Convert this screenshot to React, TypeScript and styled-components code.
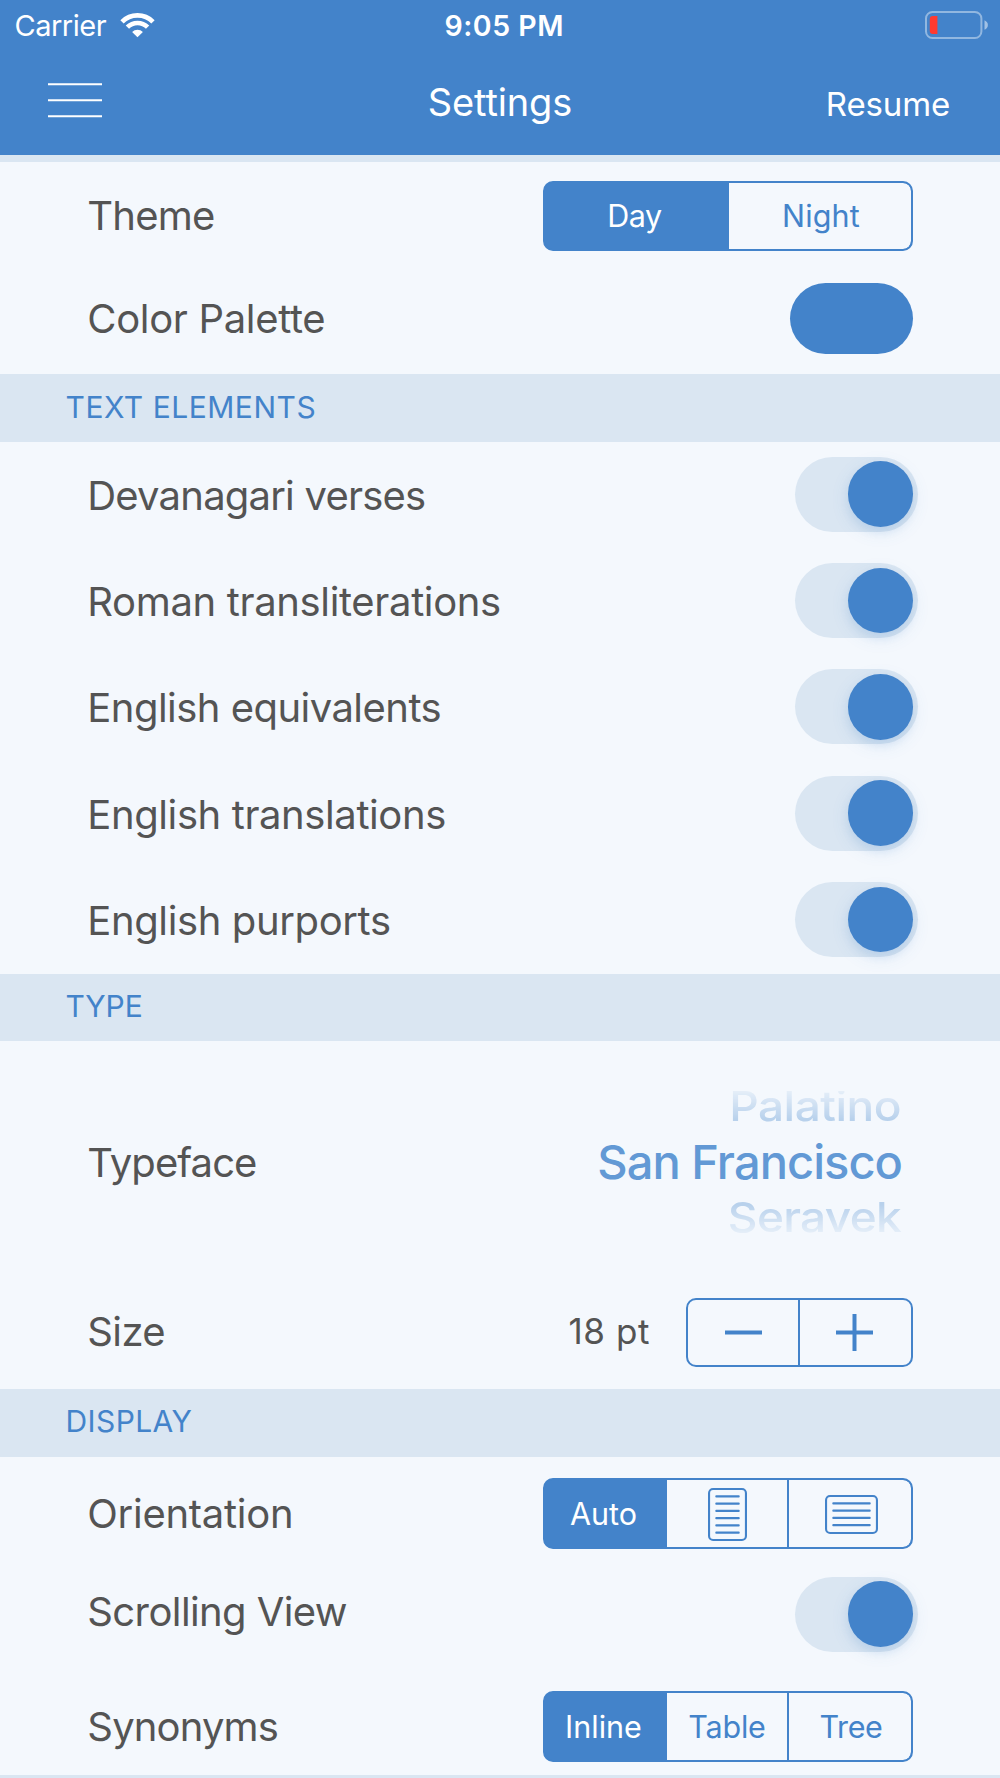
import React, { useState } from "react";
import styled, { createGlobalStyle, css, ThemeProvider } from "styled-components";

const theme = {
  blue: "#4383ca",
  paper: "#f4f8fd",
  band: "#dae6f2",
  ink: "#545454",
  picker: "#6299d5",
  pickerFaded: "#b8d1ec",
};

const GlobalStyle = createGlobalStyle`
  * { box-sizing: border-box; }
  body {
    margin: 0;
    background: ${theme.paper};
    font-family: Inter, Roboto, "Liberation Sans", sans-serif;
    -webkit-font-smoothing: antialiased;
  }
  button {
    margin: 0;
    padding: 0;
    border: 0;
    background: none;
    color: inherit;
    font: inherit;
  }
`;

const Screen = styled.div`
  width: 1000px;
  height: 1778px;
  overflow: hidden;
  display: flex;
  flex-direction: column;
  background: ${(p) => p.theme.paper};
`;

/* ---------- header ---------- */

const Header = styled.header`
  flex: none;
  height: 162px;
  background: ${(p) => p.theme.blue};
  color: #fff;
  border-bottom: 7px solid ${(p) => p.theme.band};
`;

const StatusBar = styled.div`
  height: 50px;
  display: grid;
  grid-template-columns: 1fr auto 1fr;
  align-items: center;
  padding: 0 12px 0 14.5px;
`;

const Carrier = styled.div`
  display: flex;
  align-items: center;
  gap: 14px;
  font-size: 29px;
  letter-spacing: -0.5px;
`;

const Clock = styled.time`
  font-size: 28.5px;
  font-weight: 600;
  letter-spacing: 0.5px;
  margin-left: 6px;
`;

const StatusEnd = styled.div`
  display: flex;
  justify-content: flex-end;
  margin-bottom: 1px;
`;

const NavBar = styled.div`
  height: 105px;
  display: grid;
  grid-template-columns: 1fr auto 1fr;
  align-items: center;
  padding: 0 50px 0 48px;
`;

const MenuButton = styled.button`
  width: 54px;
  height: 34.5px;
  margin-bottom: 4px;
  display: block;
`;

const Title = styled.h1`
  margin: 0 0 2px 2px;
  font-size: 38px;
  font-weight: 400;
  letter-spacing: -0.15px;
`;

const NavAction = styled.button`
  justify-self: end;
  margin-top: 3px;
  font-size: 33px;
  letter-spacing: -0.15px;
`;

/* ---------- sections and rows ---------- */

const SectionTitle = styled.h2<{ $track: number }>`
  flex: none;
  height: 67.7px;
  margin: 0;
  padding: 0 0 3px 65.5px;
  display: flex;
  align-items: center;
  background: ${(p) => p.theme.band};
  color: ${(p) => p.theme.blue};
  font-size: 30px;
  font-weight: 400;
  letter-spacing: ${(p) => p.$track}px;
`;

const Section = styled.section<{ $height: number }>`
  flex: none;
  height: ${(p) => p.$height}px;
`;

const Row = styled.div<{ $height: number; $above?: number }>`
  height: ${(p) => p.$height}px;
  margin-top: ${(p) => p.$above ?? 0}px;
  padding: 0 87px 0 87.3px;
  display: flex;
  align-items: center;
  justify-content: space-between;
`;

const Label = styled.span<{ $track: number; $nudge?: number }>`
  color: ${(p) => p.theme.ink};
  font-size: 40px;
  letter-spacing: ${(p) => p.$track}px;
  margin-top: ${(p) => p.$nudge ?? 0}px;
  white-space: nowrap;
`;

/* ---------- controls ---------- */

const Segmented = styled.div<{ $height: number; $columns: string; $drop?: number }>`
  width: 370px;
  height: ${(p) => p.$height}px;
  margin-top: ${(p) => p.$drop ?? 0}px;
  display: grid;
  grid-template-columns: ${(p) => p.$columns};
  border: 2px solid ${(p) => p.theme.blue};
  border-radius: 10px;
  background: ${(p) => p.theme.blue};
  overflow: hidden;
`;

const Segment = styled.button<{ $active?: boolean; $track?: number }>`
  display: flex;
  align-items: center;
  justify-content: center;
  font-size: 30.5px;
  letter-spacing: ${(p) => p.$track ?? 0}px;
  color: ${(p) => (p.$active ? "#fff" : p.theme.blue)};
  background: ${(p) => (p.$active ? p.theme.blue : p.theme.paper)};

  &:not(:last-child) {
    border-right: 2px solid ${(p) => p.theme.blue};
  }
  &:first-child {
    padding-right: 5px;
    border-right: 0;
  }
  &:last-child {
    padding-left: 2px;
    border-radius: 0 8px 8px 0;
  }
  svg {
    margin-top: 2px;
  }
`;

const Swatch = styled.button`
  width: 123px;
  height: 71.5px;
  border-radius: 36px;
  background: ${(p) => p.theme.blue};
`;

const Track = styled.button<{ $on: boolean; $shift: number }>`
  width: 123.3px;
  height: 75px;
  margin: ${(p) => p.$shift}px -5px 0 0;
  padding: 0 5px;
  display: flex;
  align-items: center;
  justify-content: ${(p) => (p.$on ? "flex-end" : "flex-start")};
  border-radius: 37.5px;
  background: ${(p) => p.theme.band};
`;

const Knob = styled.span`
  width: 65.5px;
  height: 65.5px;
  border-radius: 50%;
  background: ${(p) => p.theme.blue};
  box-shadow: 0 5px 18px rgba(66, 131, 202, 0.13), 0 5px 8px rgba(66, 131, 202, 0.12);
`;

const Picker = styled.div`
  height: 142px;
  width: 330px;
  margin-right: 11px;
  display: grid;
  grid-template-rows: 31px 80px 31px;
`;

const PickerRow = styled.div<{ $fade?: "up" | "down"; $track: number }>`
  display: flex;
  align-items: center;
  justify-content: flex-end;
  color: ${(p) => (p.$fade ? p.theme.pickerFaded : p.theme.picker)};
  font-size: ${(p) => (p.$fade ? 46 : 47)}px;
  line-height: 1;
  font-weight: 500;
  letter-spacing: ${(p) => p.$track}px;
  ${(p) =>
    p.$fade &&
    css`
      mask-image: linear-gradient(
        ${p.$fade === "up" ? "to top" : "to bottom"},
        #000 10%,
        rgba(0, 0, 0, 0.24) 100%
      );
    `}

  span {
    transform: ${(p) => (p.$fade ? "scaleY(0.9)" : "none")};
    margin-right: ${(p) => (p.$fade ? "1px" : "0")};
  }
`;

const SizeGroup = styled.div`
  display: flex;
  align-items: center;
  gap: 36px;
`;

const SizeValue = styled.span`
  color: ${(p) => p.theme.ink};
  font-size: 35px;
  letter-spacing: 0.6px;
  margin-bottom: 1px;
`;

const Stepper = styled.div`
  width: 227px;
  height: 69.6px;
  margin-top: 1px;
  display: grid;
  grid-template-columns: 110px 1fr;
  border: 2px solid ${(p) => p.theme.blue};
  border-radius: 10px;
`;

const StepButton = styled.button`
  display: flex;
  align-items: center;
  justify-content: center;

  &:first-child {
    padding-left: 1px;
  }
  & + & {
    padding-right: 3px;
    border-left: 2px solid ${(p) => p.theme.blue};
  }
`;

const NextSection = styled.div`
  flex: 1;
  background: ${(p) => p.theme.band};
`;

/* ---------- icons ---------- */

const WifiIcon = () => (
  <svg width="35" height="25" viewBox="0 0 35 25" fill="none" stroke="#fff" strokeWidth="4.7">
    <path d="M2.01 8.81A21.9 21.9 0 0 1 32.99 8.81" />
    <path d="M7.39 14.19A14.3 14.3 0 0 1 27.61 14.19" />
    <path d="M17.5 24.3L12.1 18.9A7.6 7.6 0 0 1 22.9 18.9Z" fill="#fff" stroke="none" />
  </svg>
);

const BatteryIcon = () => (
  <svg width="63" height="28" viewBox="0 0 63 28">
    <rect x="1" y="1" width="55.4" height="26" rx="6.5" fill="none" stroke="#fff" strokeOpacity="0.42" strokeWidth="2" />
    <path d="M59.5 9.2c2.2 1 3.4 2.8 3.4 4.8s-1.2 3.8-3.4 4.8z" fill="#fff" fillOpacity="0.5" />
    <path d="M12.4 5v18H8a3.2 3.2 0 0 1-3.2-3.2V8.200A3.2 3.2 0 0 1 8 5z" fill="#ff3a30" />
  </svg>
);

const MenuIcon = () => (
  <svg width="54" height="34.5" viewBox="0 0 54 34.5" stroke="#fff" strokeWidth="2">
    <path d="M0 1.25H54M0 17.25H54M0 33.25H54" />
  </svg>
);

const PageIcon = ({ landscape }: { landscape?: boolean }) => {
  const w = landscape ? 53 : 39;
  const h = landscape ? 39 : 53;
  const count = landscape ? 4 : 6;
  return (
    <svg width={w} height={h} viewBox={`0 0 ${w} ${h}`} fill="none" stroke={theme.blue} strokeWidth="2.1">
      <rect x="1.05" y="1.05" width={w - 2.1} height={h - 2.1} rx="4" />
      {Array.from({ length: count }, (_, i) => (
        <path key={i} strokeLinecap="round" d={`M8.3 ${8.4 + i * 7.25}H${w - 8.3}`} />
      ))}
    </svg>
  );
};

const MinusIcon = () => (
  <svg width="37" height="37" viewBox="0 0 37 37" stroke={theme.blue} strokeWidth="4">
    <path d="M0 18.500H37" />
  </svg>
);

const PlusIcon = () => (
  <svg width="37" height="37" viewBox="0 0 37 37" stroke={theme.blue} strokeWidth="4">
    <path d="M0 18.500H37M18.500 0V37" />
  </svg>
);

/* ---------- composition ---------- */

const Toggle = ({ shift }: { shift: number }) => {
  const [on, setOn] = useState(true);
  return (
    <Track $on={on} $shift={shift} role="switch" aria-checked={on} onClick={() => setOn(!on)}>
      <Knob />
    </Track>
  );
};

const textElements = [
  { name: "Devanagari verses", track: -0.79 },
  { name: "Roman transliterations", track: -0.35 },
  { name: "English equivalents", track: -0.53 },
  { name: "English translations", track: -0.4 },
  { name: "English purports", track: -0.38 },
];

export default function App() {
  return (
    <ThemeProvider theme={theme}>
      <GlobalStyle />
      <Screen>
        <Header>
          <StatusBar>
            <Carrier>
              <span>Carrier</span>
              <WifiIcon />
            </Carrier>
            <Clock>9:05 PM</Clock>
            <StatusEnd>
              <BatteryIcon />
            </StatusEnd>
          </StatusBar>
          <NavBar>
            <MenuButton aria-label="Menu">
              <MenuIcon />
            </MenuButton>
            <Title>Settings</Title>
            <NavAction>Resume</NavAction>
          </NavBar>
        </Header>

        <Section $height={212.3}>
          <Row $height={108}>
            <Label $track={-0.8} $nudge={-2}>Theme</Label>
            <Segmented $height={69.3} $columns="184px 1fr">
              <Segment $active $track={-0.5}>Day</Segment>
              <Segment $track={0.2}>Night</Segment>
            </Segmented>
          </Row>
          <Row $height={97}>
            <Label $track={-0.33}>Color Palette</Label>
            <Swatch aria-label="Color Palette" />
          </Row>
        </Section>

        <SectionTitle $track={0.53}>TEXT ELEMENTS</SectionTitle>
        <Section $height={531.7}>
          {textElements.map((item) => (
            <Row key={item.name} $height={106.34}>
              <Label $track={item.track}>{item.name}</Label>
              <Toggle shift={-2} />
            </Row>
          ))}
        </Section>

        <SectionTitle $track={-0.1}>TYPE</SectionTitle>
        <Section $height={347.6}>
          <Row $height={241}>
            <Label $track={-0.9} $nudge={2}>Typeface</Label>
            <Picker>
              <PickerRow $fade="up" $track={-0.5}>
                <span>Palatino</span>
              </PickerRow>
              <PickerRow $track={-0.95}>
                <span>San Francisco</span>
              </PickerRow>
              <PickerRow $fade="down" $track={-0.7}>
                <span>Seravek</span>
              </PickerRow>
            </Picker>
          </Row>
          <Row $height={99}>
            <Label $track={-0.6}>Size</Label>
            <SizeGroup>
              <SizeValue>18 pt</SizeValue>
              <Stepper>
                <StepButton aria-label="Smaller">
                  <MinusIcon />
                </StepButton>
                <StepButton aria-label="Larger">
                  <PlusIcon />
                </StepButton>
              </Stepper>
            </SizeGroup>
          </Row>
        </Section>

        <SectionTitle $track={0.4}>DISPLAY</SectionTitle>
        <Section $height={318.3}>
          <Row $height={114}>
            <Label $track={-0.28}>Orientation</Label>
            <Segmented $height={71.7} $columns="1fr 1fr 1fr">
              <Segment $active>Auto</Segment>
              <Segment aria-label="Portrait">
                <PageIcon />
              </Segment>
              <Segment aria-label="Landscape">
                <PageIcon landscape />
              </Segment>
            </Segmented>
          </Row>
          <Row $height={81}>
            <Label $track={-0.6}>Scrolling View</Label>
            <Toggle shift={6} />
          </Row>
          <Row $height={98} $above={25}>
            <Label $track={-0.83} $nudge={2}>Synonyms</Label>
            <Segmented $height={71.7} $columns="1fr 1fr 1fr" $drop={2}>
              <Segment $active>Inline</Segment>
              <Segment $track={-0.2}>Table</Segment>
              <Segment $track={-0.4}>Tree</Segment>
            </Segmented>
          </Row>
        </Section>
        <NextSection />
      </Screen>
    </ThemeProvider>
  );
}
